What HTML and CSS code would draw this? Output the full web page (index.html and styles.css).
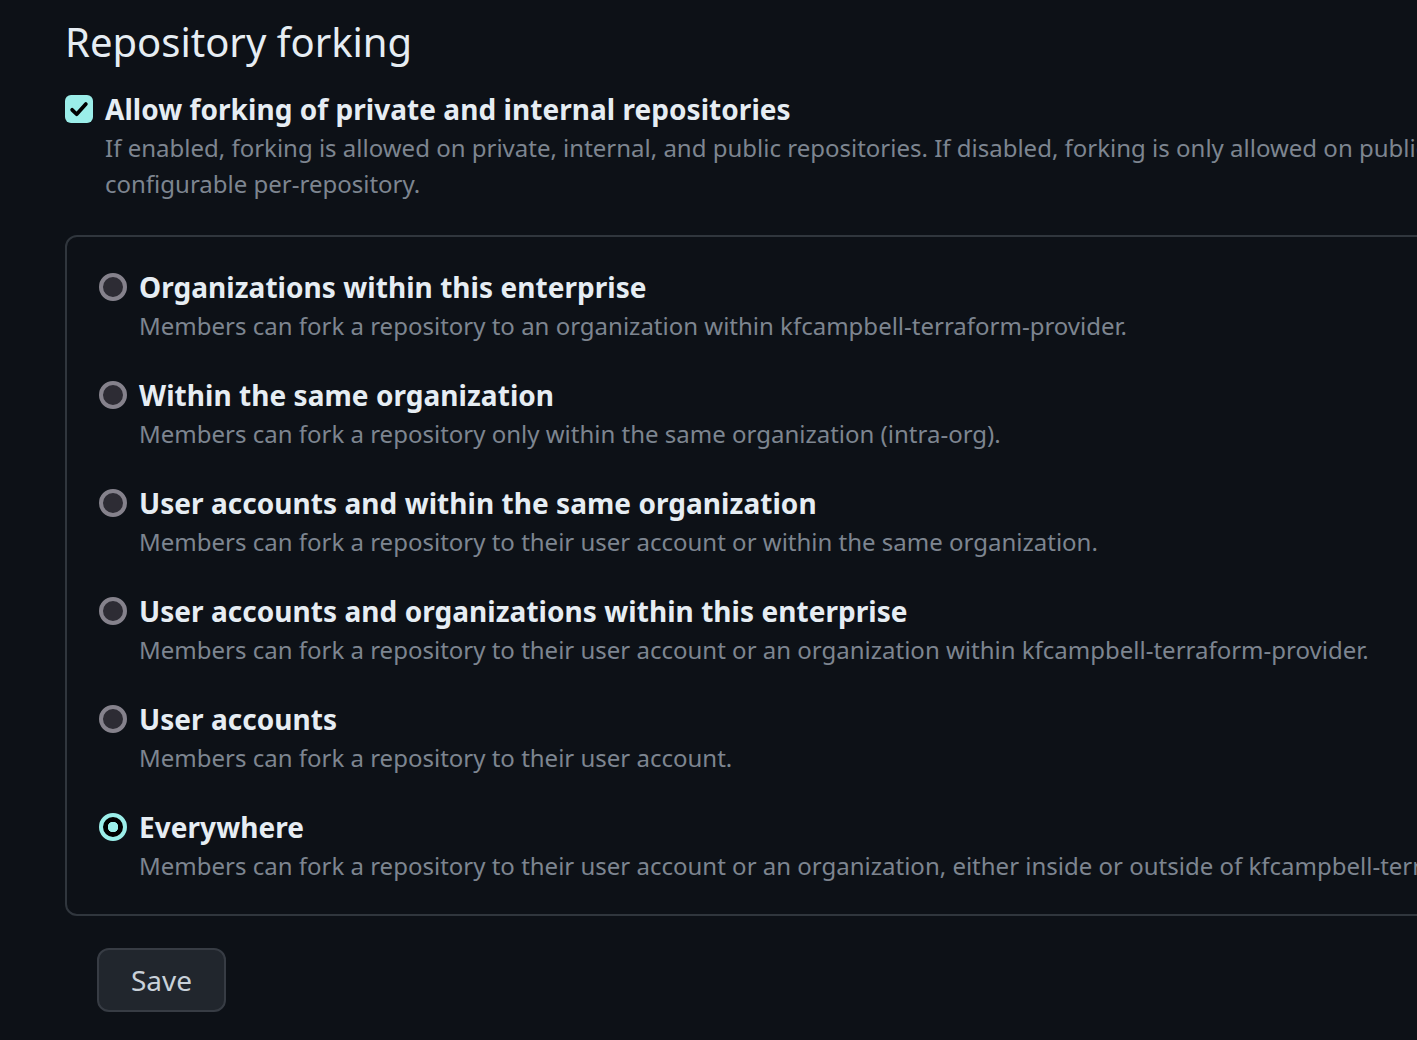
FILE: index.html
```html
<!DOCTYPE html>
<html lang="en">
<head>
    <meta charset="UTF-8">
    <meta name="viewport" content="width=device-width, initial-scale=1.0">
    <title>Repository forking</title>
    <link rel="stylesheet" href="styles.css">
</head>
<body>
    <div class="page">
        <h2 class="subhead">Repository forking</h2>

        <div class="check-item">
            <label class="check-label">
                <input type="checkbox" class="checkbox-input" checked>
                <span class="checkbox-box">
                    <svg viewBox="0 0 16 16" width="22" height="22" aria-hidden="true">
                        <polyline points="3,8.6 6.3,11.8 13,4.4" fill="none" stroke="#000" stroke-width="2.7" stroke-linecap="round" stroke-linejoin="round"/>
                    </svg>
                </span>
                Allow forking of private and internal repositories
            </label>
            <p class="note">If enabled, forking is allowed on private, internal, and public repositories. If disabled, forking is only allowed on public repositories and is configurable per-repository.</p>
        </div>

        <div class="fork-options">
            <div class="radio-item">
                <label class="radio-label">
                    <input type="radio" name="fork_policy" class="radio-input">
                    Organizations within this enterprise
                </label>
                <p class="note">Members can fork a repository to an organization within kfcampbell-terraform-provider.</p>
            </div>
            <div class="radio-item">
                <label class="radio-label">
                    <input type="radio" name="fork_policy" class="radio-input">
                    Within the same organization
                </label>
                <p class="note">Members can fork a repository only within the same organization (intra-org).</p>
            </div>
            <div class="radio-item">
                <label class="radio-label">
                    <input type="radio" name="fork_policy" class="radio-input">
                    User accounts and within the same organization
                </label>
                <p class="note">Members can fork a repository to their user account or within the same organization.</p>
            </div>
            <div class="radio-item">
                <label class="radio-label">
                    <input type="radio" name="fork_policy" class="radio-input">
                    User accounts and organizations within this enterprise
                </label>
                <p class="note">Members can fork a repository to their user account or an organization within kfcampbell-terraform-provider.</p>
            </div>
            <div class="radio-item">
                <label class="radio-label">
                    <input type="radio" name="fork_policy" class="radio-input">
                    User accounts
                </label>
                <p class="note">Members can fork a repository to their user account.</p>
            </div>
            <div class="radio-item">
                <label class="radio-label">
                    <input type="radio" name="fork_policy" class="radio-input" checked>
                    Everywhere
                </label>
                <p class="note">Members can fork a repository to their user account or an organization, either inside or outside of kfcampbell-terraform-provider.</p>
            </div>
        </div>

        <div class="actions">
            <button type="submit" class="btn">Save</button>
        </div>
    </div>
</body>
</html>
```

FILE: styles.css
```css
html, body {
    overflow: hidden;
}
body {
    margin: 0;
    background-color: #0d1117;
    color: #e6edf3;
    font-family: "Noto Sans", "DejaVu Sans", sans-serif;
}
.page {
    width: 1720px;
    padding-left: 65px;
}
.subhead {
    margin: 12px 0 16px;
    font-size: 40px;
    font-weight: 400;
    line-height: 60px;
}
.note {
    margin: 0;
    color: #7d8590;
    font-size: 24px;
    line-height: 36px;
}

/* top checkbox */
.check-item {
    margin-bottom: 33px;
}
.check-item .note {
    padding-left: 40px;
}
.check-label {
    display: flex;
    align-items: center;
    gap: 12px;
    font-size: 28px;
    font-weight: 700;
    line-height: 42px;
    letter-spacing: 0.05px;
}
.checkbox-input {
    display: none;
}
.checkbox-box {
    width: 28px;
    height: 28px;
    border-radius: 6px;
    background-color: #9beee9;
    display: flex;
    align-items: center;
    justify-content: center;
    flex-shrink: 0;
}

/* radio group */
.fork-options {
    border: 2px solid #30363d;
    border-radius: 12px;
    padding: 29px 32px 30px;
    display: flex;
    flex-direction: column;
    gap: 30px;
}
.radio-item .note {
    padding-left: 40px;
}
.radio-label {
    display: flex;
    align-items: center;
    gap: 12px;
    font-size: 28px;
    font-weight: 700;
    line-height: 42px;
    letter-spacing: 0.05px;
}
.radio-input {
    appearance: none;
    -webkit-appearance: none;
    margin: 0;
    width: 28px;
    height: 28px;
    border: 4px solid #85828c;
    border-radius: 50%;
    background-color: #2d2c34;
    flex-shrink: 0;
}
.radio-input:checked {
    border-color: #9beee9;
    background: radial-gradient(circle, #9beee9 0 5px, #000 5.5px);
}

/* save */
.actions {
    margin-top: 32px;
    padding-left: 32px;
}
.btn {
    height: 64px;
    padding: 0 32px;
    font-family: inherit;
    font-size: 28px;
    color: #c9d1d9;
    background-color: #21262d;
    border: 2px solid #373c44;
    border-radius: 12px;
    cursor: pointer;
}
.btn:hover { background-color: #30363d; }
```
